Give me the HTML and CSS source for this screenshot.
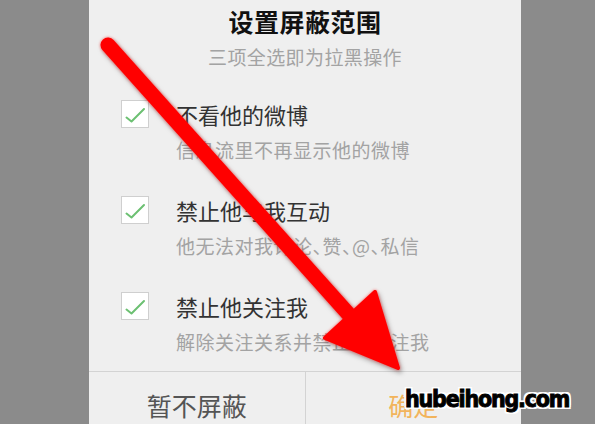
FILE: index.html
```html
<!DOCTYPE html>
<html lang="zh-CN">
<head>
    <meta charset="UTF-8">
    <meta name="viewport" content="width=device-width, initial-scale=1.0">
    <title>设置屏蔽范围</title>
    <link rel="stylesheet" href="styles.css">
</head>
<body>
    <!-- Block dialog -->
    <div class="dialog">
        <div class="dialog-head">
            <h1 class="dialog-title">设置屏蔽范围</h1>
            <p class="dialog-sub">三项全选即为拉黑操作</p>
        </div>

        <ul class="options">
            <li class="option">
                <span class="check"><svg viewBox="0 0 28 28" width="28" height="28"><path d="M5.5 17.5 L10.5 21.5 L23 9" /></svg></span>
                <span class="option-title">不看他的微博</span>
                <span class="option-desc">信息流里不再显示他的微博</span>
            </li>
            <li class="option">
                <span class="check"><svg viewBox="0 0 28 28" width="28" height="28"><path d="M5.5 17.5 L10.5 21.5 L23 9" /></svg></span>
                <span class="option-title">禁止他与我互动</span>
                <span class="option-desc">他无法对我评论、赞、@、私信</span>
            </li>
            <li class="option">
                <span class="check"><svg viewBox="0 0 28 28" width="28" height="28"><path d="M5.5 17.5 L10.5 21.5 L23 9" /></svg></span>
                <span class="option-title">禁止他关注我</span>
                <span class="option-desc">解除关注关系并禁止他关注我</span>
            </li>
        </ul>

        <div class="actions">
            <button class="btn btn-cancel">暂不屏蔽</button>
            <button class="btn btn-ok">确定</button>
        </div>
    </div>

    <!-- Red pointer arrow drawn over the dialog -->
    <svg class="arrow" viewBox="0 0 595 424" width="595" height="424">
        <line x1="108" y1="45" x2="352" y2="318" />
        <polygon points="375,292 325,338 398,368" />
    </svg>

    <div class="watermark">hubeihong.com</div>
</body>
</html>
```

FILE: styles.css
```css
:root {
    --backdrop: #8b8b8b;
    --dialog-bg: #efefef;
    --line: #d3d3d3;
    --text-main: #333;
    --text-sub: #a3a3a3;
    --accent: #f2b45c;
    --check: #6cc072;
}

* {
    box-sizing: border-box;
}

body {
    margin: 0;
    width: 595px;
    height: 424px;
    overflow: hidden;
    background-color: var(--backdrop);
    font-family: "Noto Sans CJK SC", "Noto Sans", sans-serif;
    position: relative;
}

.dialog {
    margin-left: 89px;
    width: 432px;
    height: 424px;
    background-color: var(--dialog-bg);
    padding-top: 4px;
    display: flex;
    flex-direction: column;
}

.dialog-head {
    text-align: center;
}

.dialog-title {
    margin: 0;
    font-size: 25px;
    line-height: 34px;
    font-weight: bold;
    color: #111;
    letter-spacing: 0.5px;
}

.dialog-sub {
    margin: 5px 0 0;
    font-size: 19px;
    line-height: 28px;
    color: var(--text-sub);
    letter-spacing: 0.4px;
}

.options {
    list-style: none;
    margin: 0;
    padding: 28px 0 15px 32px;
    display: flex;
    flex-direction: column;
    gap: 31px;
}

.option {
    display: grid;
    grid-template-columns: 28px 1fr;
    column-gap: 27px;
    row-gap: 7px;
}

.check {
    grid-row: 1;
    align-self: center;
    width: 28px;
    height: 28px;
    background: #fff;
    border: 1px solid #cfcfcf;
    display: flex;
}

.check svg {
    margin: -1px;
}

.check path {
    fill: none;
    stroke: var(--check);
    stroke-width: 2;
    stroke-linecap: round;
    stroke-linejoin: round;
}

.option-title {
    grid-column: 2;
    font-size: 22px;
    line-height: 30px;
    color: var(--text-main);
}

.option-desc {
    grid-column: 2;
    font-size: 19px;
    line-height: 28px;
    color: var(--text-sub);
    letter-spacing: 0.5px;
    /* proportional CJK punctuation */
    font-feature-settings: "halt";
}

.actions {
    border-top: 1px solid var(--line);
    display: flex;
    flex: 1;
}

.btn {
    flex: 1;
    border: 0;
    background: none;
    font-family: inherit;
    font-size: 25px;
    line-height: 34px;
    padding: 16px 0 0;
    display: flex;
    justify-content: center;
    align-items: flex-start;
    cursor: pointer;
}

.btn-cancel {
    color: #555;
}

.btn-ok {
    color: var(--accent);
    border-left: 1px solid var(--line);
}

/* Overlays */
.arrow {
    position: absolute;
    left: 0;
    top: 0;
    pointer-events: none;
    filter: drop-shadow(0 0 1.5px rgba(255, 40, 40, 0.7)) drop-shadow(2px 3px 2px rgba(0, 0, 0, 0.28));
}

.arrow line {
    stroke: #ff0000;
    stroke-width: 15;
    stroke-linecap: round;
}

.arrow polygon {
    fill: #ff0000;
    stroke: #ff0000;
    stroke-width: 4;
    stroke-linejoin: round;
}

.watermark {
    position: absolute;
    left: 405px;
    top: 384px;
    font-family: "DejaVu Sans", sans-serif;
    font-weight: bold;
    font-stretch: condensed;
    font-size: 23px;
    line-height: 30px;
    letter-spacing: -1.2px;
    color: #000;
    -webkit-text-stroke: 0.9px #000;
    text-shadow:
        2px 0 0 #fff, -2px 0 0 #fff, 0 2px 0 #fff, 0 -2px 0 #fff,
        2px 2px 0 #fff, -2px 2px 0 #fff, 2px -2px 0 #fff, -2px -2px 0 #fff;
}
```
